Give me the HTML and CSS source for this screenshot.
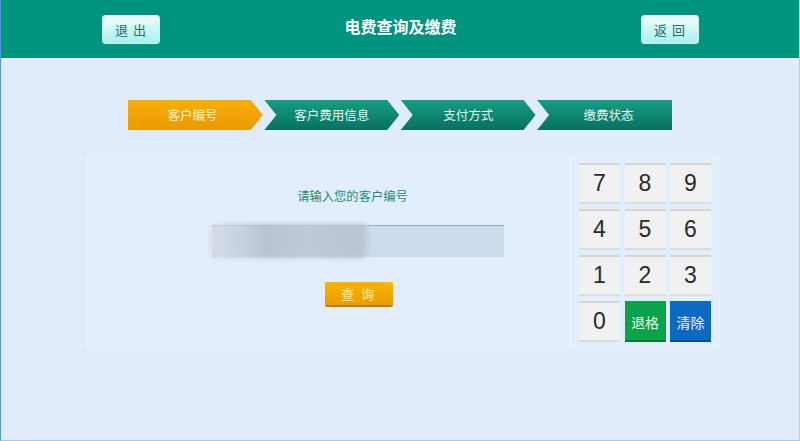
FILE: index.html
```html
<!DOCTYPE html>
<html lang="zh-CN">
<head>
<meta charset="utf-8">
<title>电费查询及缴费</title>
<link rel="stylesheet" href="styles.css">
</head>
<body>
<div class="page">
  <header class="header">
    <button class="hbtn">退 出</button>
    <h1 class="title">电费查询及缴费</h1>
    <button class="hbtn">返 回</button>
  </header>
  <nav class="steps">
    <div class="step step-first active">客户编号</div>
    <div class="step step-mid">客户费用信息</div>
    <div class="step step-mid">支付方式</div>
    <div class="step step-last">缴费状态</div>
  </nav>
  <main class="panel">
    <section class="form">
      <p class="prompt">请输入您的客户编号</p>
      <div class="input">
        <span class="redact"></span>
      </div>
      <button class="query">查 询</button>
    </section>
    <section class="keypad">
      <button class="key">7</button>
      <button class="key">8</button>
      <button class="key">9</button>
      <button class="key">4</button>
      <button class="key">5</button>
      <button class="key">6</button>
      <button class="key">1</button>
      <button class="key">2</button>
      <button class="key">3</button>
      <button class="key">0</button>
      <button class="key key-back">退格</button>
      <button class="key key-clear">清除</button>
    </section>
  </main>
</div>
</body>
</html>
```
FILE: styles.css
```css
* { box-sizing: border-box; }
html, body { margin: 0; padding: 0; }
body {
  font-family: "Noto Sans CJK SC", "Noto Sans", sans-serif;
  background: #e0ecfc;
}
.page {
  width: 800px;
  height: 441px;
  background: #e0ecfc;
  border-left: 1px solid #4f97e0;
  border-right: 1px solid #b3d2f0;
  border-bottom: 1px solid #a6cbee;
  display: flex;
  flex-direction: column;
  overflow: hidden;
}
.header {
  height: 58px;
  background: #00937e;
  display: flex;
  align-items: center;
  justify-content: space-between;
  padding: 0 100px 0 101px;
  flex-shrink: 0;
}
.hbtn {
  width: 58px;
  height: 29px;
  margin-top: 1px;
  border: 1px solid #c8f2f0;
  border-radius: 3px;
  background: linear-gradient(#f2fdfd, #a6f1ee);
  color: #2b6b6a;
  font-family: "Noto Sans CJK SC", sans-serif;
  font-size: 13px;
  padding: 0;
  letter-spacing: 1px;
}
.title {
  margin: 0;
  color: #ffffff;
  font-size: 16px;
  font-weight: bold;
  line-height: 20px;
  margin-bottom: 6px;
}
.steps {
  margin: 42px 0 0 127px;
  width: 544px;
  height: 30px;
  display: grid;
  grid-template-columns: repeat(4, 1fr);
  column-gap: 1.5px;
}
.step {
  height: 30px;
  display: flex;
  align-items: center;
  justify-content: center;
  color: #e6f5ef;
  font-size: 12.5px;
  padding-bottom: 1px;
  background: linear-gradient(#179c86, #077160);
}
.step.active {
  background: linear-gradient(#f9ad08, #e99b00);
  color: #fff1d6;
}
.step-first {
  clip-path: polygon(0 0, calc(100% - 12px) 0, 100% 50%, calc(100% - 12px) 100%, 0 100%);
  padding-right: 6px;
}
.step-mid {
  clip-path: polygon(0 0, calc(100% - 12px) 0, 100% 50%, calc(100% - 12px) 100%, 0 100%, 12px 50%);
}
.step-last {
  clip-path: polygon(0 0, 100% 0, 100% 100%, 0 100%, 12px 50%);
  padding-left: 8px;
}
.panel {
  margin: 26px 0 0 85px;
  width: 634px;
  height: 192px;
  border: 1px solid #eaf2fd;
  background: #e2eefc;
  display: flex;
}
.form {
  flex: 1;
  display: flex;
  flex-direction: column;
  align-items: center;
  padding: 29px 0 0 60px;
  border-right: 1px solid #eef5fe;
}
.prompt {
  margin: 0 12px 0 0;
  color: #1d8a78;
  font-size: 12.3px;
  line-height: 20px;
}
.input {
  margin-top: 19px;
  width: 292px;
  height: 33px;
  background: #cddcef;
  border: 1px solid #9eaabb;
  border-bottom-color: #e4eefa;
  border-right-color: #e4eefa;
  position: relative;
}
.redact {
  position: absolute;
  left: -4px;
  top: -2px;
  width: 160px;
  height: 34px;
  background: linear-gradient(90deg, #d6dee8 0%, #c7d1dd 20%, #b8c3d1 35%, #c0cad7 60%, #b9c4d2 95%, #cbd7e6 100%);
  filter: blur(2px);
  border-radius: 8px;
}
.query {
  margin-top: 24px;
  width: 68px;
  height: 25px;
  border: none;
  border-bottom: 2px solid #c27d00;
  border-radius: 2px;
  background: linear-gradient(#fcb400, #ea9c00);
  color: #fde9b8;
  font-family: "Noto Sans CJK SC", sans-serif;
  font-size: 13px;
  letter-spacing: 2px;
  padding: 0;
}
.keypad {
  width: 148px;
  padding: 6px 6px 0 8px;
  display: grid;
  grid-template-columns: repeat(3, 41px);
  grid-template-rows: repeat(4, 41px);
  column-gap: 4.5px;
  row-gap: 5px;
  align-content: start;
}
.key {
  width: 41px;
  height: 41px;
  padding: 0;
  border: none;
  border-top: 2px solid #d6d6d6;
  border-bottom: 2px solid #dcdcdc;
  background: #f1f1f1;
  color: #2a2a2a;
  font-family: "Liberation Sans", Arial, sans-serif;
  font-size: 23px;
  line-height: 1;
}
.key-back {
  background: #0aa34a;
  border-top-color: #0aa34a;
  border-bottom-color: #077a36;
  color: #e8fff0;
  font-family: "Noto Sans CJK SC", sans-serif;
  font-size: 14px;
}
.key-clear {
  background: #0b69c0;
  border-top-color: #0b69c0;
  border-bottom-color: #074e90;
  color: #e8f2ff;
  font-family: "Noto Sans CJK SC", sans-serif;
  font-size: 14px;
}
```
